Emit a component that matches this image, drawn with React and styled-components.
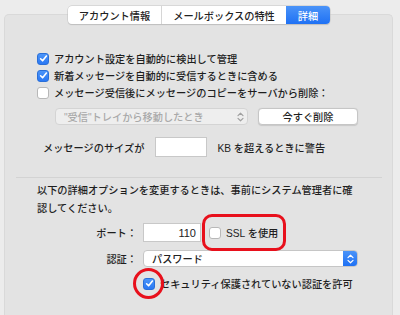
import React from "react";
import styled, { createGlobalStyle, css } from "styled-components";

const Global = createGlobalStyle`
  html, body {
    margin: 0;
    padding: 0;
    background: #ececec;
  }
  body {
    width: 400px;
    height: 315px;
    overflow: hidden;
    font-family: "Liberation Sans", "Noto Sans CJK JP", sans-serif;
    font-size: 10.2px;
    font-weight: 500;
    color: #1e1e1e;
  }
`;

const Root = styled.div`
  display: flex;
  flex-direction: column;
  padding-top: 6px;
  height: 315px;
  box-sizing: border-box;
  overflow: hidden;
`;

const Tabs = styled.div`
  align-self: center;
  display: flex;
  height: 18px;
  margin-left: -2px;
  margin-bottom: -10px;
  position: relative;
  z-index: 1;
  background: #fff;
  border-radius: 4px;
  box-shadow: 0 0 0 0.5px #c4c4c4, 0 1px 1px rgba(0, 0, 0, 0.18);
  overflow: hidden;
`;

const Tab = styled.div`
  display: flex;
  align-items: center;
  justify-content: center;
  width: ${(p) => p.w}px;
  color: #222;
  & + & {
    border-left: 1px solid #d6d6d6;
  }
  ${(p) =>
    p.active &&
    css`
      background: linear-gradient(#4a93f8, #1f71f4);
      color: #fff;
      border-left: none !important;
    `}
`;

const Panel = styled.div`
  flex: 1;
  margin: 0 7px 0 4px;
  background: #e3e3e3;
  border: 1px solid #d9d9d9;
  border-bottom: none;
  border-radius: 5px 5px 0 0;
  padding: 35px 10px 0 11px;
  box-sizing: border-box;
`;

const Section = styled.div`
  padding-left: 21px;
  display: flex;
  flex-direction: column;
`;

const CheckRow = styled.label`
  display: flex;
  align-items: center;
  gap: 5px;
  height: 17px;
  margin-top: ${(p) => p.top || 0}px;
  position: relative;
`;

const Box = styled.span`
  width: 12px;
  height: 12px;
  box-sizing: border-box;
  border-radius: 3px;
  display: flex;
  align-items: center;
  justify-content: center;
  ${(p) =>
    p.checked
      ? css`
          background: linear-gradient(#4b94f8, #2a78f4);
          border: 0.5px solid #2a6fd8;
        `
      : css`
          background: #fff;
          border: 1px solid #b8b8b8;
        `}
`;

const Check = ({ checked }) => (
  <Box checked={checked}>
    {checked && (
      <svg width="9" height="9" viewBox="0 0 9 9">
        <path d="M1.6 4.8 L3.6 6.8 L7.4 2" fill="none" stroke="#fff" strokeWidth="1.6" strokeLinecap="round" strokeLinejoin="round" />
      </svg>
    )}
  </Box>
);

const PopRow = styled.div`
  display: flex;
  align-items: center;
  margin: 7px 0 0 18px;
  gap: 10px;
`;

const Popup = styled.div`
  width: ${(p) => p.w}px;
  height: 17px;
  box-sizing: border-box;
  border-radius: 4px;
  display: flex;
  align-items: center;
  padding-left: 8px;
  overflow: hidden;
  ${(p) =>
    p.disabled
      ? css`
          background: #eeeeee;
          border: 1px solid #d4d4d4;
          color: #a9a9a9;
        `
      : css`
          background: #fff;
          border: 1px solid #c6c6c6;
          color: #222;
        `}
`;

const PopText = styled.span`
  flex: 1;
`;

const Stepper = styled.span`
  width: 14px;
  align-self: stretch;
  display: flex;
  align-items: center;
  justify-content: center;
  ${(p) =>
    p.blue &&
    css`
      background: linear-gradient(#4a93f8, #1f71f4);
    `}
`;

const Arrows = ({ color }) => (
  <svg width="7" height="10" viewBox="0 0 7 10">
    <path d="M1 3.6 L3.5 1.2 L6 3.6 M1 6.4 L3.5 8.8 L6 6.4" fill="none" stroke={color} strokeWidth="1.2" strokeLinecap="round" strokeLinejoin="round" />
  </svg>
);

const Button = styled.div`
  width: 100px;
  height: 17px;
  box-sizing: border-box;
  background: #fff;
  border: 1px solid #c6c6c6;
  border-radius: 4px;
  display: flex;
  align-items: center;
  justify-content: center;
  box-shadow: 0 0.5px 1px rgba(0, 0, 0, 0.12);
`;

const SizeRow = styled.div`
  display: flex;
  align-items: center;
  margin: 12px 0 0 6px;
  height: 20px;
`;

const Field = styled.div`
  width: ${(p) => p.w}px;
  height: ${(p) => p.h || 19}px;
  box-sizing: border-box;
  background: #fff;
  border: 1px solid #c8c8c8;
  display: flex;
  align-items: center;
  justify-content: flex-end;
  padding-right: 4px;
  margin: 0 ${(p) => p.mr || 0}px 0 ${(p) => p.ml || 0}px;
  color: #222;
  font-size: 11px;
`;

const Separator = styled.div`
  height: 1px;
  background: #d3d3d3;
  margin-top: 20px;
`;

const Note = styled.p`
  margin: 4px 0 0;
  width: 322px;
  line-height: 17.5px;
`;

const Form = styled.div`
  display: grid;
  grid-template-columns: 121px auto;
  column-gap: 6px;
  align-items: center;
  margin-top: 6px;
`;

const Label = styled.span`
  text-align: right;
  margin-top: ${(p) => p.top || 0}px;
`;

const Inline = styled.div`
  display: flex;
  align-items: center;
  margin-top: ${(p) => p.top || 0}px;
`;

const Highlight = styled.span`
  position: relative;
  display: flex;
  align-items: center;
  gap: 5px;
  &::after {
    content: "";
    position: absolute;
    pointer-events: none;
    border: 3.5px solid #e8101c;
    ${(p) =>
      p.round
        ? css`
            width: 25px;
            height: 25px;
            border-radius: 50%;
            left: -10px;
            top: -10px;
          `
        : css`
            left: -7px;
            right: -8px;
            top: -11px;
            bottom: -11px;
            border-radius: 10px;
          `}
  }
`;

export default function App() {
  return (
    <Root>
      <Global />
      <Tabs>
        <Tab w={93}>アカウント情報</Tab>
        <Tab w={124}>メールボックスの特性</Tab>
        <Tab w={44} active>
          詳細
        </Tab>
      </Tabs>
      <Panel>
        <Section>
          <CheckRow>
            <Check checked />
            アカウント設定を自動的に検出して管理
          </CheckRow>
          <CheckRow>
            <Check checked />
            新着メッセージを自動的に受信するときに含める
          </CheckRow>
          <CheckRow>
            <Check />
            メッセージ受信後にメッセージのコピーをサーバから削除：
          </CheckRow>
          <PopRow>
            <Popup w={193} disabled>
              <PopText>"受信"トレイから移動したとき</PopText>
              <Stepper>
                <Arrows color="#a0a0a0" />
              </Stepper>
            </Popup>
            <Button>今すぐ削除</Button>
          </PopRow>
          <SizeRow>
            メッセージのサイズが
            <Field w={52} h={20} ml={11} mr={10} />
            KB を超えるときに警告
          </SizeRow>
        </Section>
        <Separator />
        <Section>
          <Note>
            以下の詳細オプションを変更するときは、事前にシステム管理者に確認してください。
          </Note>
        </Section>
        <Form>
          <Label>ポート：</Label>
          <Inline>
            <Field w={58} mr={8}>
              110
            </Field>
            <Highlight>
              <Check />
              SSL を使用
            </Highlight>
          </Inline>
          <Label top={8}>認証：</Label>
          <Inline top={8}>
            <Popup w={215}>
              <PopText>パスワード</PopText>
              <Stepper blue>
                <Arrows color="#fff" />
              </Stepper>
            </Popup>
          </Inline>
          <span />
          <CheckRow top={8}>
            <Highlight round>
              <Check checked />
            </Highlight>
            セキュリティ保護されていない認証を許可
          </CheckRow>
        </Form>
      </Panel>
    </Root>
  );
}
